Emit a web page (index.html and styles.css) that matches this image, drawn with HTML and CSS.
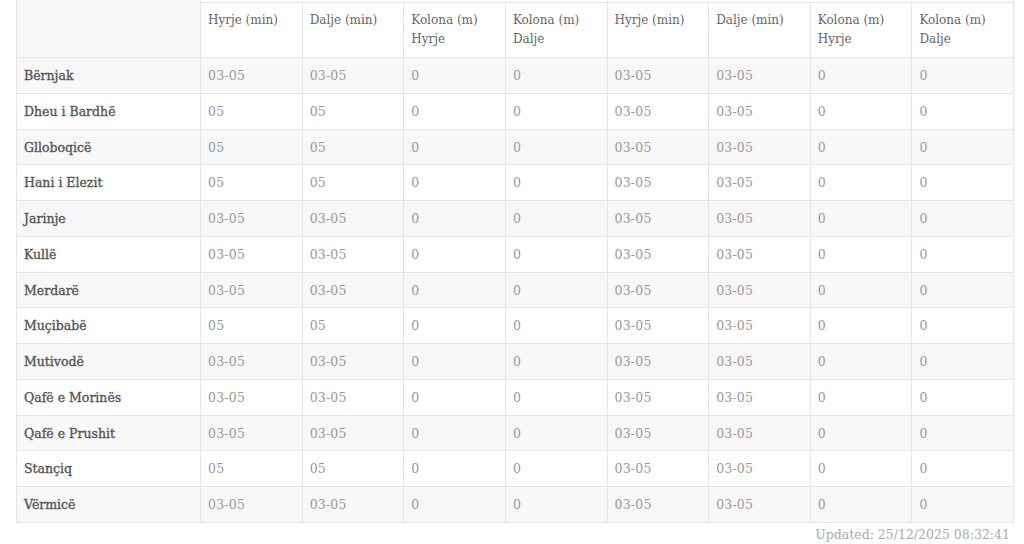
FILE: index.html
```html
<!DOCTYPE html>
<html lang="sq">
<head>
<meta charset="utf-8">
<title>Kalimet kufitare</title>
<link rel="stylesheet" href="styles.css">
</head>
<body>
<div class="wrap">
  <table class="grid">
    <colgroup>
      <col class="c-name">
      <col><col><col><col><col><col><col><col>
    </colgroup>
    <thead>
      <tr class="group">
        <th class="corner" rowspan="2"></th>
        <th colspan="4"></th>
        <th colspan="4"></th>
      </tr>
      <tr class="heads">
        <th>Hyrje (min)</th>
        <th>Dalje (min)</th>
        <th>Kolona (m)<br>Hyrje</th>
        <th>Kolona (m)<br>Dalje</th>
        <th>Hyrje (min)</th>
        <th>Dalje (min)</th>
        <th>Kolona (m)<br>Hyrje</th>
        <th>Kolona (m)<br>Dalje</th>
      </tr>
    </thead>
    <tbody>
      <tr><th>Bërnjak</th><td>03-05</td><td>03-05</td><td>0</td><td>0</td><td>03-05</td><td>03-05</td><td>0</td><td>0</td></tr>
      <tr><th>Dheu i Bardhë</th><td>05</td><td>05</td><td>0</td><td>0</td><td>03-05</td><td>03-05</td><td>0</td><td>0</td></tr>
      <tr><th>Glloboqicë</th><td>05</td><td>05</td><td>0</td><td>0</td><td>03-05</td><td>03-05</td><td>0</td><td>0</td></tr>
      <tr><th>Hani i Elezit</th><td>05</td><td>05</td><td>0</td><td>0</td><td>03-05</td><td>03-05</td><td>0</td><td>0</td></tr>
      <tr><th>Jarinje</th><td>03-05</td><td>03-05</td><td>0</td><td>0</td><td>03-05</td><td>03-05</td><td>0</td><td>0</td></tr>
      <tr><th>Kullë</th><td>03-05</td><td>03-05</td><td>0</td><td>0</td><td>03-05</td><td>03-05</td><td>0</td><td>0</td></tr>
      <tr><th>Merdarë</th><td>03-05</td><td>03-05</td><td>0</td><td>0</td><td>03-05</td><td>03-05</td><td>0</td><td>0</td></tr>
      <tr><th>Muçibabë</th><td>05</td><td>05</td><td>0</td><td>0</td><td>03-05</td><td>03-05</td><td>0</td><td>0</td></tr>
      <tr><th>Mutivodë</th><td>03-05</td><td>03-05</td><td>0</td><td>0</td><td>03-05</td><td>03-05</td><td>0</td><td>0</td></tr>
      <tr><th>Qafë e Morinës</th><td>03-05</td><td>03-05</td><td>0</td><td>0</td><td>03-05</td><td>03-05</td><td>0</td><td>0</td></tr>
      <tr><th>Qafë e Prushit</th><td>03-05</td><td>03-05</td><td>0</td><td>0</td><td>03-05</td><td>03-05</td><td>0</td><td>0</td></tr>
      <tr><th>Stançiq</th><td>05</td><td>05</td><td>0</td><td>0</td><td>03-05</td><td>03-05</td><td>0</td><td>0</td></tr>
      <tr><th>Vërmicë</th><td>03-05</td><td>03-05</td><td>0</td><td>0</td><td>03-05</td><td>03-05</td><td>0</td><td>0</td></tr>
    </tbody>
  </table>
  <p class="updated">Updated: 25/12/2025 08:32:41</p>
</div>
</body>
</html>
```

FILE: styles.css
```css
html, body {
  margin: 0;
  padding: 0;
  background: #fff;
}

body {
  font-family: "DejaVu Serif", "Liberation Serif", serif;
  font-size: 12px;
  line-height: 18.57px;
  color: #666;
}

.wrap {
  padding: 0 10px 0 16px;
}

.grid {
  width: 998px;
  table-layout: fixed;
  border-collapse: collapse;
  margin-top: -1px;
}

.c-name {
  width: 184px;
}

.grid th,
.grid td {
  border: 1px solid #e6e6e6;
  padding: 9px 7px 7px 7px;
  text-align: left;
  vertical-align: top;
}

.grid .group th {
  padding: 0;
  height: 2px;
  line-height: 2px;
}

.grid .corner {
  background: #f8f8f8;
}

.grid .heads th {
  font-weight: normal;
  color: #666;
  height: 39px;
  padding-top: 8px;
}

.grid tbody th,
.grid tbody td {
  line-height: 18.75px;
}

.grid tbody th {
  font-weight: normal;
  font-size: 12.5px;
  color: #555;
  -webkit-text-stroke: 0.35px #555;
}

.grid tbody td {
  color: #999;
  font-size: 12.5px;
  letter-spacing: 0.2px;
}

.grid tbody tr:nth-child(odd) {
  background: #f8f8f8;
}

.updated {
  margin: 3px 0 0;
  text-align: right;
  color: #aaa;
  font-size: 12.5px;
  padding-right: 4px;
}
```
